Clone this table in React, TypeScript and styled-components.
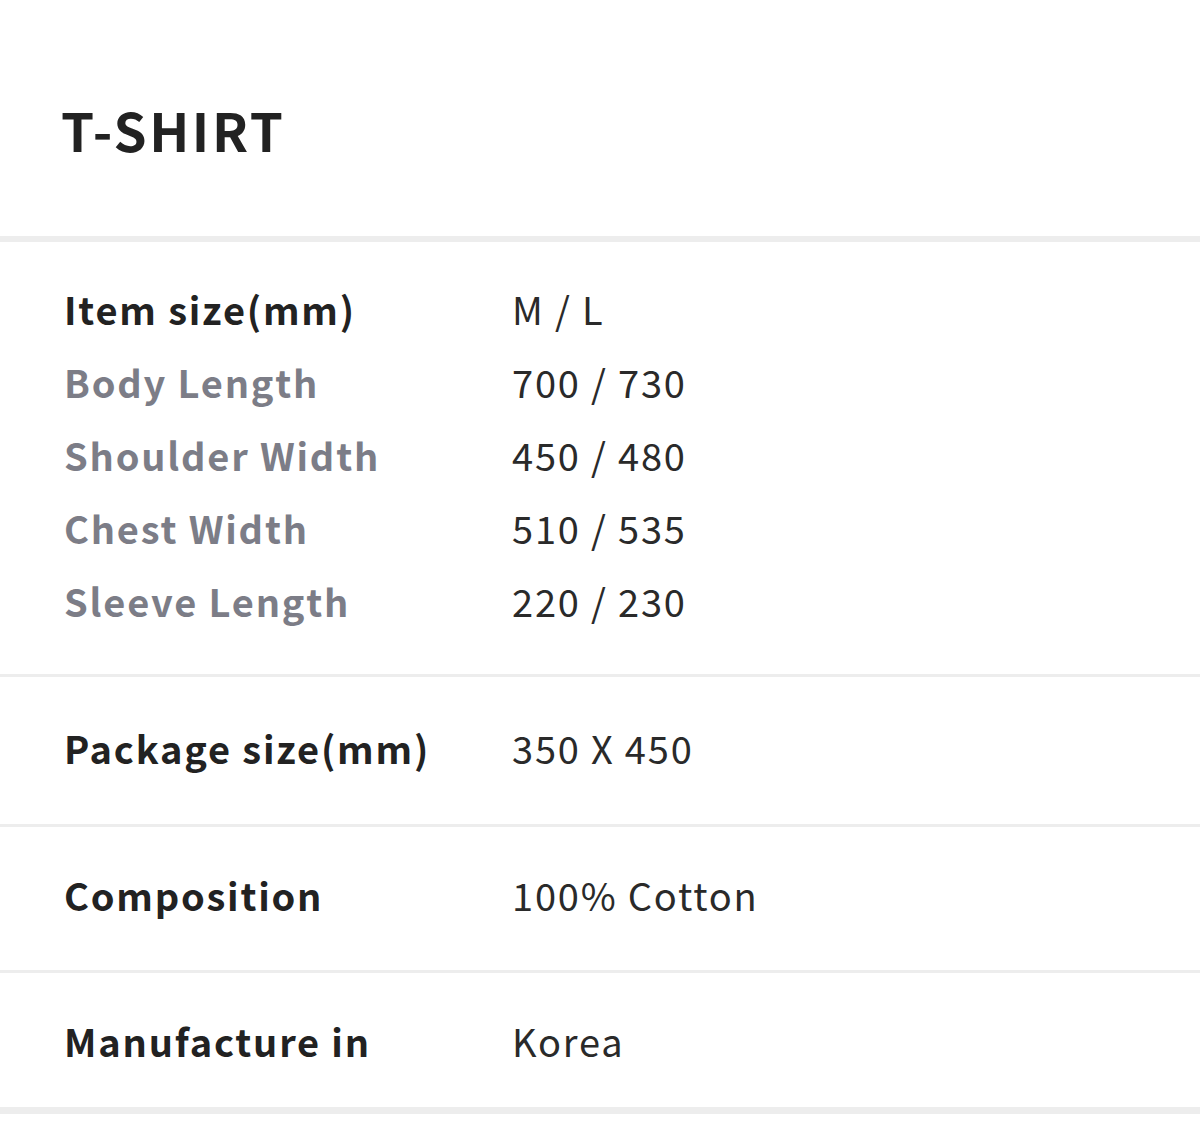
import React from "react";
import styled, { createGlobalStyle } from "styled-components";

const Global = createGlobalStyle`
  html, body { margin: 0; padding: 0; background: #fff; }
  body { font-family: "Noto Sans CJK KR", "Noto Sans", sans-serif; }
`;

const Page = styled.div`
  width: 1200px;
  display: flex;
  flex-direction: column;
`;

const Header = styled.header`
  height: 242px;
  display: flex;
  align-items: center;
  padding: 0 61px;
  box-sizing: border-box;
  border-bottom: 6px solid #ededed;
`;

const Title = styled.h1`
  margin: 0;
  font-size: 53px;
  font-weight: 700;
  color: #222;
  letter-spacing: 2.6px;
  padding-top: 22px;
`;

const Section = styled.section<{ $top: number; $bottom: number; $line: number }>`
  padding: ${(p) => `${p.$top}px 64px ${p.$bottom}px`};
  border-bottom: ${(p) => p.$line}px solid #ededed;
  display: flex;
  flex-direction: column;
`;

const Row = styled.div`
  display: grid;
  grid-template-columns: 448px 1fr;
  height: 73px;
  align-items: center;
`;

const Label = styled.div<{ $sub?: boolean }>`
  font-size: 38px;
  font-weight: 700;
  letter-spacing: 1.8px;
  color: ${(p) => (p.$sub ? "#7c7d87" : "#222")};
`;

const Value = styled.div`
  font-size: 38px;
  font-weight: 400;
  letter-spacing: 1.8px;
  color: #2a2a2a;
`;

const sizes: [string, string][] = [
  ["Body Length", "700 / 730"],
  ["Shoulder Width", "450 / 480"],
  ["Chest Width", "510 / 535"],
  ["Sleeve Length", "220 / 230"],
];

export default function App() {
  return (
    <Page>
      <Global />
      <Header>
        <Title>T-SHIRT</Title>
      </Header>
      <Section $top={30} $bottom={37} $line={3}>
        <Row>
          <Label>Item size(mm)</Label>
          <Value>M / L</Value>
        </Row>
        {sizes.map(([l, v]) => (
          <Row key={l}>
            <Label $sub>{l}</Label>
            <Value>{v}</Value>
          </Row>
        ))}
      </Section>
      <Section $top={34} $bottom={40} $line={3}>
        <Row>
          <Label>Package size(mm)</Label>
          <Value>350 X 450</Value>
        </Row>
      </Section>
      <Section $top={31} $bottom={39} $line={3}>
        <Row>
          <Label>Composition</Label>
          <Value>100% Cotton</Value>
        </Row>
      </Section>
      <Section $top={31} $bottom={30} $line={7}>
        <Row>
          <Label>Manufacture in</Label>
          <Value>Korea</Value>
        </Row>
      </Section>
    </Page>
  );
}
